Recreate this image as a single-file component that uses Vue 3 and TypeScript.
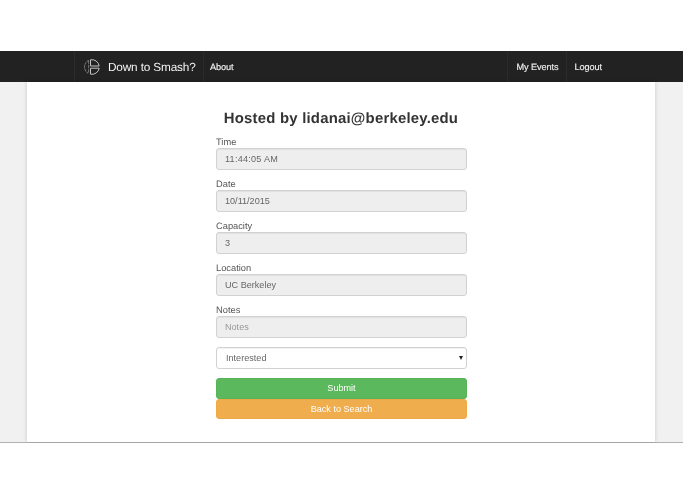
<script setup lang="ts">
const fields = [
  { label: 'Time', value: '11:44:05 AM', placeholder: '', wide: true },
  { label: 'Date', value: '10/11/2015', placeholder: '', wide: false },
  { label: 'Capacity', value: '3', placeholder: '', wide: false },
  { label: 'Location', value: 'UC Berkeley', placeholder: '', wide: false },
  { label: 'Notes', value: '', placeholder: 'Notes', wide: false },
]
</script>

<template>
  <div class="page">
    <nav class="navbar">
      <div class="nav-inner">
        <a class="brand">
          <svg class="logo" width="16" height="16" viewBox="0 0 16 16" fill="none" stroke="#c4c4c4" stroke-width="1">
            <path d="M6.5 0.8A7.4 7.4 0 0 1 15.2 7H6.5Z" />
            <path d="M6.5 9.2H15.2A7.4 7.4 0 0 1 6.5 15.2Z" />
            <path d="M4.6 1.4A7.4 7.4 0 0 0 4.6 14.6" stroke="#8c8c8c" stroke-dasharray="2.4 0.8" />
            <path d="M4.6 1.4V14.6" stroke="#8c8c8c" stroke-width="0.8" stroke-dasharray="3.4 1" />
          </svg>
          <span class="brand-text">Down to Smash?</span>
        </a>
        <a class="link about">About</a>
        <div class="spacer"></div>
        <a class="link events">My Events</a>
        <a class="link logout">Logout</a>
      </div>
    </nav>
    <div class="band">
      <main class="panel">
        <h2 class="title">Hosted by lidanai@berkeley.edu</h2>
        <form class="form" @submit.prevent>
          <div v-for="f in fields" :key="f.label" class="group">
            <label class="label">{{ f.label }}</label>
            <input class="control" :class="{ wide: f.wide }" disabled :value="f.value" :placeholder="f.placeholder" />
          </div>
          <div class="select-wrap">
            <select class="select">
              <option>Interested</option>
            </select>
            <span class="caret"></span>
          </div>
          <button class="btn submit" type="submit">Submit</button>
          <button class="btn back" type="button">Back to Search</button>
        </form>
      </main>
    </div>
  </div>
</template>

<style>
html, body { margin: 0; background: #fff; overflow: hidden; }
</style>

<style scoped>
.page {
  width: 683px;
  padding-top: 51px;
  font-family: "Liberation Sans", Arial, sans-serif;
  color: #333;
  text-rendering: geometricPrecision;
  filter: blur(0.25px);
}
.navbar {
  height: 31px;
  background: #222;
}
.nav-inner {
  display: flex;
  align-items: stretch;
  height: 31px;
  margin-left: 74px;
  width: 534px;
  border-left: 1px solid #2b2b2b;
}
.brand {
  display: flex;
  align-items: center;
  gap: 8px;
  padding-left: 9px;
  width: 119px;
  flex: none;
  box-sizing: content-box;
  color: #f4f4f4;
  font-size: 11.8px;
  letter-spacing: -0.16px;
  white-space: nowrap;
  border-right: 1px solid #2b2b2b;
}
.logo { flex: none; }
.link {
  display: flex;
  align-items: center;
  padding: 0 7px;
  color: #eee;
  font-size: 9.2px;
  letter-spacing: -0.1px;
  -webkit-text-stroke: 0.15px #eee;
  white-space: nowrap;
}
.about { padding-left: 6px; }
.spacer { flex: 1; }
.events {
  padding: 0 8px;
  border-left: 1px solid #2b2b2b;
  border-right: 1px solid #2b2b2b;
}
.band {
  background: #f1f1f1;
  border-bottom: 1px solid #b4b2b0;
}
.panel {
  width: 628px;
  height: 360px;
  margin-left: 27px;
  background: #fff;
  box-shadow: 0 0 4px rgba(0, 0, 0, 0.18);
  overflow: hidden;
  box-sizing: border-box;
  padding-top: 28px;
}
.title {
  margin: 0;
  text-align: center;
  font-size: 14.9px;
  line-height: 18px;
  font-weight: 700;
  color: #333;
  letter-spacing: 0.22px;
}
.form {
  width: 251px;
  margin: 10px 0 0 189px;
  display: flex;
  flex-direction: column;
}
.group { height: 42px; }
.label {
  display: block;
  height: 10px;
  line-height: 9px;
  font-size: 9.3px;
  color: #555;
}
.control {
  display: block;
  width: 100%;
  height: 22px;
  box-sizing: border-box;
  margin: 0;
  padding: 0 8px 1px;
  font: 9.1px "Liberation Sans", Arial, sans-serif;
  color: #666;
  background: #eee;
  border: 1px solid #d2d2d2;
  border-radius: 3px;
  box-shadow: inset 0 1px 1px rgba(0, 0, 0, 0.06);
  opacity: 1;
  -webkit-text-fill-color: #666;
}
.control.wide { letter-spacing: 0.24px; }
.control::placeholder { color: #999; -webkit-text-fill-color: #999; opacity: 1; }
.select-wrap {
  position: relative;
  height: 22px;
  margin: -1px 0 9px;
}
.select {
  appearance: none;
  display: block;
  width: 100%;
  height: 22px;
  box-sizing: border-box;
  margin: 0;
  padding: 0 9px 1px;
  font: 9.1px "Liberation Sans", Arial, sans-serif;
  color: #666;
  border: 1px solid #d2d2d2;
  border-radius: 3px;
  box-shadow: inset 0 1px 1px rgba(0, 0, 0, 0.06);
  background: #fff;
}
.caret {
  position: absolute;
  right: 4px;
  top: 9px;
  width: 0;
  height: 0;
  border-left: 2px solid transparent;
  border-right: 2px solid transparent;
  border-top: 4px solid #222;
}
.btn {
  display: block;
  width: 100%;
  margin: 0;
  border: 1px solid transparent;
  border-radius: 3px;
  padding: 0 0 1px;
  font: 9.1px "Liberation Sans", Arial, sans-serif;
  color: #fff;
  text-align: center;
}
.submit { height: 21px; background: #5cb85c; border-color: #57b357; }
.back { height: 20px; background: #f0ad4e; border-color: #efa945; }
</style>
